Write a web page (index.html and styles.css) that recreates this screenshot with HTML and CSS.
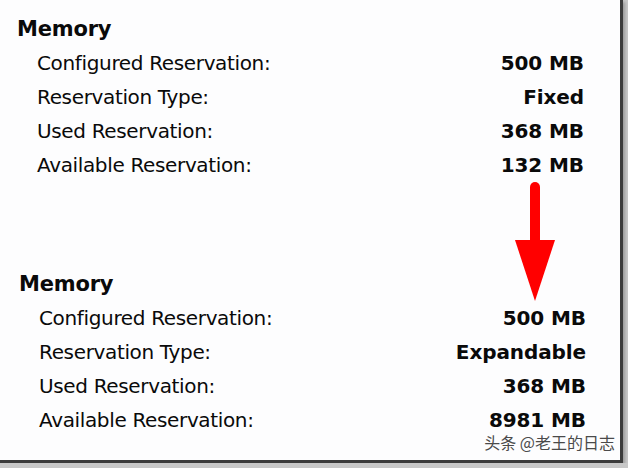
FILE: index.html
```html
<!DOCTYPE html>
<html>
<head>
<title>Memory Reservation</title>
<link rel="stylesheet" href="styles.css">
</head>
<body>

<div class="panel">

  <div class="section">
    <h2>Memory</h2>
    <div class="row"><span>Configured Reservation:</span><b>500 MB</b></div>
    <div class="row"><span>Reservation Type:</span><b>Fixed</b></div>
    <div class="row"><span>Used Reservation:</span><b>368 MB</b></div>
    <div class="row"><span>Available Reservation:</span><b>132 MB</b></div>
  </div>

  <div class="section section-after">
    <h2>Memory</h2>
    <div class="row"><span>Configured Reservation:</span><b>500 MB</b></div>
    <div class="row"><span>Reservation Type:</span><b>Expandable</b></div>
    <div class="row"><span>Used Reservation:</span><b>368 MB</b></div>
    <div class="row"><span>Available Reservation:</span><b>8981 MB</b></div>
  </div>

  <!-- red arrow drawn over the gap between the two shots -->
  <svg class="arrow" width="44" height="122" viewBox="0 0 44 122">
    <line x1="22" y1="5" x2="22" y2="62" stroke="#f00" stroke-width="10" stroke-linecap="round"/>
    <polygon points="2,58 42,58 22,119" fill="#f00"/>
  </svg>

  <div class="watermark">头条 @老王的日志</div>
</div>

</body>
</html>
```

FILE: styles.css
```css
body {
  margin: 0;
  background-color: #c8c8c8;
  font-family: "DejaVu Sans", Verdana, sans-serif;
  color: #0a0a0a;
}

.panel {
  position: relative;
  box-sizing: border-box;
  width: 623px;
  height: 463px;
  padding: 12px 36px 0 17px;
  background-color: #fdfdfe;
  border-right: 3px solid #3c3c3c;
  border-bottom: 3px solid #3c3c3c;
  box-shadow: 2px 2px 3px #9a9a9a;
}

.section h2 {
  margin: 0;
  font-size: 21px;
  line-height: 34px;
  font-weight: bold;
  letter-spacing: -0.2px;
}

.row {
  display: flex;
  justify-content: space-between;
  padding-left: 20px;
  font-size: 20px;
  line-height: 34px;
  letter-spacing: -0.35px;
}

.row b {
  letter-spacing: -0.1px;
}

.section-after {
  margin-top: 85px;
  margin-left: 2px;
  margin-right: -2px;
}

.arrow {
  position: absolute;
  left: 513px;
  top: 182px;
}

.watermark {
  position: absolute;
  right: 5px;
  bottom: 6px;
  font-family: "Noto Sans CJK SC", sans-serif;
  font-size: 16px;
  color: #4a4a4a;
}
```
